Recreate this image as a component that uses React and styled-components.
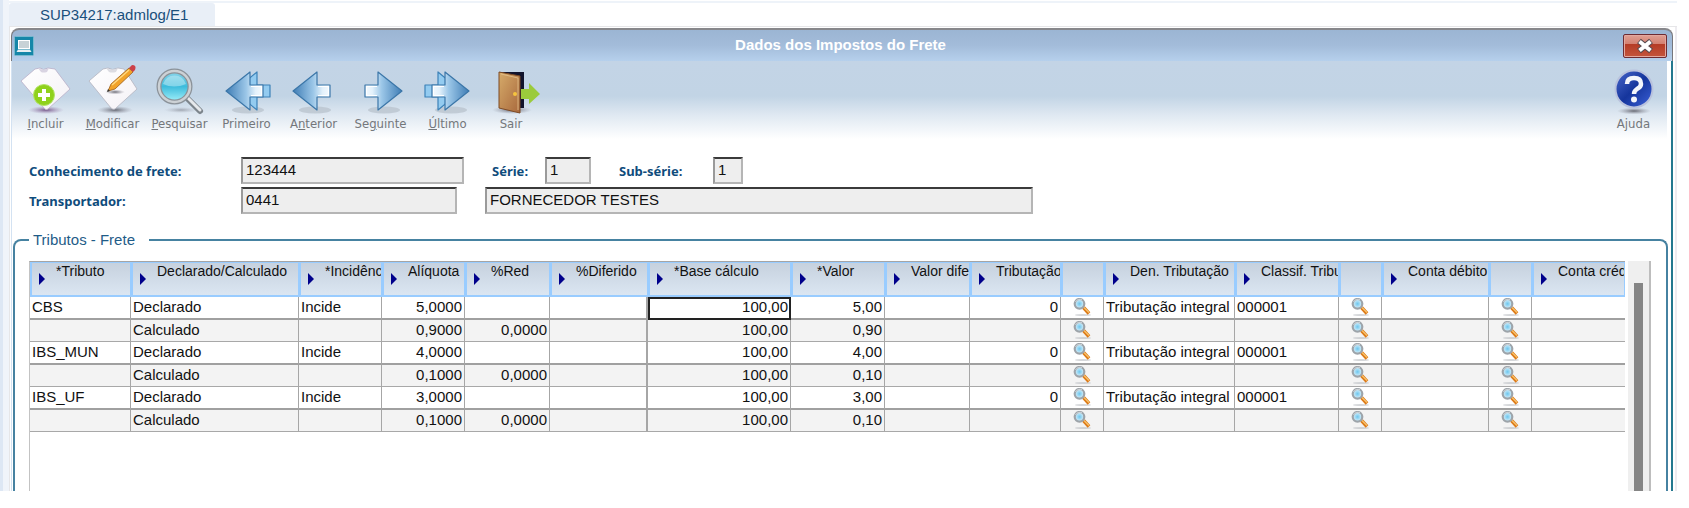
import styled, { createGlobalStyle, css } from "styled-components"


const columns = [
    { title: "*Tributo", width: 101 },
    { title: "Declarado/Calculado", width: 168 },
    { title: "*Incidência", width: 83 },
    { title: "Alíquota", width: 83, right: true },
    { title: "%Red", width: 85, right: true },
    { title: "%Diferido", width: 98, right: true, divider: true },
    { title: "*Base cálculo", width: 143, right: true },
    { title: "*Valor", width: 94, right: true },
    { title: "Valor diferido", width: 85, right: true },
    { title: "Tributação", width: 91, right: true },
    { lookup: true, label: "Procurar tributação", width: 43 },
    { title: "Den. Tributação", width: 131 },
    { title: "Classif. Tributária", width: 104 },
    { lookup: true, label: "Procurar classificação", width: 43 },
    { title: "Conta débito", width: 107 },
    { lookup: true, label: "Procurar conta débito", width: 43 },
    { title: "Conta crédito" },
]

const rows = [
    ["CBS", "Declarado", "Incide", "5,0000", "", "", "100,00", "5,00", "", "0", "", "Tributação integral", "000001", "", "", "", ""],
    ["", "Calculado", "", "0,9000", "0,0000", "", "100,00", "0,90", "", "", "", "", "", "", "", "", ""],
    ["IBS_MUN", "Declarado", "Incide", "4,0000", "", "", "100,00", "4,00", "", "0", "", "Tributação integral", "000001", "", "", "", ""],
    ["", "Calculado", "", "0,1000", "0,0000", "", "100,00", "0,10", "", "", "", "", "", "", "", "", ""],
    ["IBS_UF", "Declarado", "Incide", "3,0000", "", "", "100,00", "3,00", "", "0", "", "Tributação integral", "000001", "", "", "", ""],
    ["", "Calculado", "", "0,1000", "0,0000", "", "100,00", "0,10", "", "", "", "", "", "", "", "", ""],
]


function IconDefs(){
    return(
        <HiddenSvg aria-hidden="true">
            <defs>
                <linearGradient id="paper" x1="0" y1="0" x2="1" y2="1">
                    <stop offset="0" stopColor="#ffffff"/>
                    <stop offset="1" stopColor="#f4f1f6"/>
                </linearGradient>
                <radialGradient id="shadow">
                    <stop offset="0" stopColor="#4b4b55" stopOpacity=".8"/>
                    <stop offset="1" stopColor="#8a8a98" stopOpacity="0"/>
                </radialGradient>
                <radialGradient id="purpleShadow">
                    <stop offset="0" stopColor="#6c4a80" stopOpacity=".9"/>
                    <stop offset="1" stopColor="#a58ab5" stopOpacity="0"/>
                </radialGradient>
                <linearGradient id="lens" x1="0" y1="0" x2="0" y2="1">
                    <stop offset="0" stopColor="#8fd6ea"/>
                    <stop offset=".5" stopColor="#3dbcdc"/>
                    <stop offset="1" stopColor="#a4f2fb"/>
                </linearGradient>
                <linearGradient id="arrow" x1="0" y1="0" x2="1" y2="0">
                    <stop offset="0" stopColor="#3f7db5"/>
                    <stop offset=".55" stopColor="#9cc7e8"/>
                    <stop offset=".8" stopColor="#e3f1fb"/>
                    <stop offset="1" stopColor="#f4faff"/>
                </linearGradient>
                <linearGradient id="door" x1="0" y1="0" x2="1" y2="1">
                    <stop offset="0" stopColor="#d6ab6a"/>
                    <stop offset="1" stopColor="#a8683c"/>
                </linearGradient>
                <linearGradient id="help" x1="0" y1="0" x2="1" y2="1">
                    <stop offset="0" stopColor="#4a68cc"/>
                    <stop offset=".5" stopColor="#15359c"/>
                    <stop offset="1" stopColor="#3c62da"/>
                </linearGradient>
                <radialGradient id="smallLens">
                    <stop offset="0" stopColor="#6cc6ee"/>
                    <stop offset="1" stopColor="#dff2fb"/>
                </radialGradient>
            </defs>
        </HiddenSvg>
    )
}

function AddIcon(){
    return(
        <svg width="50" height="48" viewBox="0 0 50 48" aria-hidden="true">
            <ellipse cx="25" cy="44" rx="18" ry="4" fill="url(#purpleShadow)"/>
            <path d="M14 3 L19 2 Q22 5 27 2 L34 3 L49 23 L27 43 Q25 45 23 42 L0 15 Z" fill="url(#paper)" stroke="#b9afc8" strokeWidth=".8"/>
            <path d="M17 2 Q22 5 28 2 L26 6 Q22 7 20 6 Z" fill="#d9d4e2"/>
            <circle cx="23" cy="29" r="10.5" fill="#8fd11c" stroke="#b4e36a"/>
            <path d="M23 23 V35 M17 29 H29" stroke="#fff" strokeWidth="4"/>
        </svg>
    )
}

function EditIcon(){
    return(
        <svg width="50" height="48" viewBox="0 0 50 48" aria-hidden="true">
            <ellipse cx="27" cy="44" rx="18" ry="4" fill="url(#shadow)"/>
            <path d="M15 3 L20 2 Q24 5 30 2 L36 3 L49 23 L27 43 Q25 44 23 42 L1 15 Z" fill="url(#paper)" stroke="#b4b4bf" strokeWidth=".8"/>
            <path d="M18 2 Q24 5 30 2 L28 6 Q24 7 21 6 Z" fill="#dcdce2"/>
            <ellipse cx="27" cy="26" rx="10" ry="2.5" fill="url(#shadow)"/>
            <path d="M20 25 L23 18 L41 2 L45 6 L27 23 Z" fill="#f2a32b" stroke="#9b5e1c" strokeWidth=".8"/>
            <path d="M24 19 L41 4" stroke="#ffd983" strokeWidth="1.4"/>
            <path d="M41 2 L44 -1 Q49 -1 47 4 L45 6 Z" fill="#cc4048"/>
            <path d="M19 26 L20 23 L22 25 Z" fill="#333"/>
        </svg>
    )
}

function SearchIcon(){
    return(
        <svg width="50" height="48" viewBox="0 0 50 48" aria-hidden="true">
            <ellipse cx="26" cy="44" rx="17" ry="3" fill="url(#shadow)" opacity=".5"/>
            <path d="M32 32 L45 45" stroke="#7d858c" strokeWidth="6" strokeLinecap="round"/>
            <path d="M32 31 L45 44" stroke="#e6e9ec" strokeWidth="3" strokeLinecap="round"/>
            <circle cx="19.5" cy="20.5" r="15.5" fill="url(#lens)" stroke="#8b9299" strokeWidth="5"/>
            <circle cx="19.5" cy="20.5" r="15.5" fill="none" stroke="#ccd1d5" strokeWidth="2.5"/>
            <path d="M8 18 A12 12 0 0 1 31 18 Q19 23 8 18" fill="#d3f1f8" opacity=".45"/>
        </svg>
    )
}

function ArrowIcon({ direction , double }){
    const left = direction === "left"
    return(
        <svg width="50" height="48" viewBox="0 0 50 48" aria-hidden="true">
            <ellipse cx={left ? 26 : 28} cy="44" rx="16" ry="3.5" fill="#b6c0ca" opacity=".7"/>
            <g transform={left ? undefined : "translate(50 0) scale(-1 1)"}>
                {double && <path d="M12 25 L35 6 V19 H48 V31 H35 V44 Z" fill="#93cbf0" stroke="#3d82b8" strokeWidth="1.2" strokeLinejoin="round"/>}
                <path d="M4 25 L28 6 V19 H41 V31 H28 V44 Z" fill="url(#arrow)" stroke="#3b76a8" strokeWidth="1.2" strokeLinejoin="round"/>
                <path d="M29 20.500 H39.500 V29.500 H29" fill="none" stroke="#fff" strokeWidth="1"/>
            </g>
        </svg>
    )
}

function ExitIcon(){
    return(
        <svg width="50" height="48" viewBox="0 0 50 48" aria-hidden="true">
            <ellipse cx="26" cy="44" rx="20" ry="4" fill="url(#shadow)"/>
            <path d="M13 6 H38 V42 H32 L13 7 Z" fill="#11132b"/>
            <path d="M13 6 L34 10 V47 L13 42 Z" fill="url(#door)" stroke="#7d4a25" strokeWidth="1"/>
            <path d="M15 8 L32 12 V44" fill="none" stroke="#e5c38e" strokeWidth=".8"/>
            <circle cx="29" cy="28" r="2" fill="#f5c33e"/>
            <path d="M35 23 H43 V17 L54 28 L43 38 V33 H35 Z" fill="#9bcb3c"/>
        </svg>
    )
}

function HelpIcon(){
    return(
        <svg width="50" height="48" viewBox="0 0 50 48" aria-hidden="true">
            <ellipse cx="25" cy="45" rx="17" ry="3.5" fill="url(#shadow)"/>
            <circle cx="25" cy="23" r="18.5" fill="url(#help)" stroke="#b9c2dd" strokeWidth="2"/>
            <path d="M18 18 Q18 12 25 12 Q32 12 32 18 Q32 21 28 23 Q25 25 25 28" fill="none" stroke="#f3f5fb" strokeWidth="4.5"/>
            <circle cx="25" cy="33.5" r="3" fill="#f3f5fb"/>
        </svg>
    )
}

function LookupIcon(){
    return(
        <svg width="18" height="18" viewBox="0 0 18 18" aria-hidden="true">
            <ellipse cx="10" cy="17" rx="8" ry="1" fill="#b9bdc2" opacity=".6"/>
            <path d="M10.500 9.500 L16 15.500" stroke="#dc7a18" strokeWidth="3.6"/>
            <path d="M11 9.500 L16 14.500" stroke="#f8c570" strokeWidth="1.2"/>
            <circle cx="6.500" cy="5.800" r="4.800" fill="url(#smallLens)" stroke="#9da4aa" strokeWidth="2.2"/>
            <path d="M2.500 4 A4.800 4.800 0 0 1 9 1.800" fill="none" stroke="#d4d8db" strokeWidth="1"/>
        </svg>
    )
}

function SortIcon(){
    return(
        <svg width="6" height="12" viewBox="0 0 6 12" aria-hidden="true">
            <path d="M0 0 L6 6 L0 12 Z" fill="#00008b"/>
        </svg>
    )
}

function WindowIcon(){
    return(
        <svg width="20" height="20" viewBox="0 0 20 20" aria-hidden="true">
            <rect x=".5" y=".5" width="19" height="19" rx="1" fill="#1586a8" stroke="#79b9cf"/>
            <rect x="4.500" y="4.500" width="11" height="8" fill="#c8d2d6" stroke="#fff"/>
            <path d="M4 13.500 H16 L17.500 16 H2.500 Z" fill="#e6eef1"/>
        </svg>
    )
}

function CloseIcon(){
    return(
        <svg width="18" height="16" viewBox="0 0 18 16" aria-hidden="true">
            <path d="M3 3 L15 13 M15 3 L3 13" stroke="#54494f" strokeWidth="6"/>
            <path d="M3.500 3.500 L14.500 12.500 M14.500 3.500 L3.500 12.500" stroke="#fff" strokeWidth="4"/>
        </svg>
    )
}


function Header(){
    return(
        <TitleBar>
            <WindowIcon/>
            <Title>Dados dos Impostos do Frete</Title>
            <CloseButton type="button" aria-label="Fechar"><CloseIcon/></CloseButton>
        </TitleBar>
    )
}

function Toolbar(){
    return(
        <ToolbarWrapper>
            <ToolButton type="button"><AddIcon/><span><u>I</u>ncluir</span></ToolButton>
            <ToolButton type="button"><EditIcon/><span><u>M</u>odificar</span></ToolButton>
            <ToolButton type="button"><SearchIcon/><span><u>P</u>esquisar</span></ToolButton>
            <ToolButton type="button"><ArrowIcon direction="left" double/><span>Primeiro</span></ToolButton>
            <ToolButton type="button"><ArrowIcon direction="left"/><span>A<u>n</u>terior</span></ToolButton>
            <ToolButton type="button"><ArrowIcon direction="right"/><span>Se<u>g</u>uinte</span></ToolButton>
            <ToolButton type="button"><ArrowIcon direction="right" double/><span><u>Ú</u>ltimo</span></ToolButton>
            <ToolButton type="button" $narrow><ExitIcon/><span>Sair</span></ToolButton>
            <Spacer/>
            <ToolButton type="button"><HelpIcon/><span>Ajuda</span></ToolButton>
        </ToolbarWrapper>
    )
}

function FreightForm(){
    return(
        <Form>
            <FormRow>
                <Label htmlFor="conhecimento" $width={212}>Conhecimento de frete:</Label>
                <Input id="conhecimento" $width={223} defaultValue="123444" readOnly/>
                <Gap/>
                <Label htmlFor="serie" $width={53}>Série:</Label>
                <Input id="serie" $width={46} defaultValue="1" readOnly/>
                <Gap/>
                <Label htmlFor="subserie" $width={94}>Sub-série:</Label>
                <Input id="subserie" $width={30} defaultValue="1" readOnly/>
            </FormRow>
            <FormRow>
                <Label htmlFor="transportador" $width={212}>Transportador:</Label>
                <Input id="transportador" $width={216} defaultValue="0441" readOnly/>
                <Gap/>
                <Input aria-label="Nome do transportador" $width={548} defaultValue="FORNECEDOR TESTES" readOnly/>
            </FormRow>
        </Form>
    )
}

function TaxTable(){
    return(
        <Grid>
            <TableArea>
                <Table>
                    <colgroup>
                        {columns.map((column, i) => <Col key={i} $width={column.width}/>)}
                    </colgroup>
                    <thead>
                        <tr>
                            {columns.map((column, i) => (
                                <HeadCell key={i} scope="col">
                                    {column.title && <HeadContent><SortIcon/><span>{column.title}</span></HeadContent>}
                                </HeadCell>
                            ))}
                        </tr>
                    </thead>
                    <tbody>
                        {rows.map((row, r) => (
                            <Row key={r} $calculated={r % 2 === 1}>
                                {row.map((value, c) => (
                                    <Cell key={c} $right={columns[c].right} $divider={columns[c].divider} $selected={r === 0 && c === 6}>
                                        {columns[c].lookup
                                            ? <LookupButton type="button" aria-label={columns[c].label}><LookupIcon/></LookupButton>
                                            : value}
                                    </Cell>
                                ))}
                            </Row>
                        ))}
                    </tbody>
                </Table>
            </TableArea>
            <ScrollTrack><ScrollThumb/></ScrollTrack>
        </Grid>
    )
}

export default function App(){
    return(
        <>
            <GlobalStyle/>
            <IconDefs/>
            <Page>
                <Content>
                    <Tabs><Tab type="button">SUP34217:admlog/E1</Tab></Tabs>
                    <Window>
                        <Header/>
                        <WindowBody>
                            <Toolbar/>
                            <FreightForm/>
                            <Group>
                                <Legend>Tributos - Frete</Legend>
                                <TaxTable/>
                            </Group>
                        </WindowBody>
                    </Window>
                </Content>
            </Page>
        </>
    )
}


const GlobalStyle = createGlobalStyle`
* {
    box-sizing: border-box;
}
body {
    margin: 0;
    background: #ffffff;
    font-family: "Liberation Sans", Arial, sans-serif;
    font-size: 15px;
}
button, input {
    font: inherit;
    margin: 0;
}
`
const HiddenSvg = styled.svg`
position: absolute;
width: 0;
height: 0;
`
const Page = styled.div`
margin-right: 12px;
padding-left: 3px;
background: #dde7f4;
`
const Content = styled.div`
border-left: 6px solid #f0f4fa;
background: #ffffff;
padding-top: 1px;
`
const Tabs = styled.div`
display: flex;
height: 26px;
border-top: 2px solid #eef3f9;
border-bottom: 1px solid #e6e6e8;
`
const Tab = styled.button`
width: 206px;
padding: 0 0 0 31px;
border: none;
border-radius: 3px 3px 0 0;
background: #e9eff7;
color: #1a4f7c;
text-align: left;
`
const Window = styled.div`
padding: 1px 2px 0 1px;
border-left: 1px solid #e6e6e8;
border-right: 2px solid #eeecf0;
`
const TitleBar = styled.header`
display: grid;
grid-template-columns: 1fr auto 1fr;
align-items: center;
height: 33px;
padding: 0 5px 0 2px;
border: 1px solid #77777c;
border-top: 2px solid #87878b;
border-bottom: none;
border-radius: 8px 8px 0 0;
background: linear-gradient(#9bb5d3, #a3bcda 50%, #b6d0ec);
`
const Title = styled.h1`
margin: 0 0 2px;
color: #ffffff;
font-size: 15px;
line-height: 18px;
`
const CloseButton = styled.button`
display: flex;
align-items: center;
justify-content: center;
justify-self: end;
width: 44px;
height: 24px;
padding: 0;
border: 1px solid #6e2c33;
border-radius: 2px;
box-shadow: inset 0 0 0 1px #e3a89f;
background: linear-gradient(#e0a094, #d37f70 42%, #b53c26 43%, #c4553d);
`
const WindowBody = styled.main`
border-left: 1px solid #d3e2f2;
border-right: 2px solid #24788f;
`
const ToolbarWrapper = styled.nav`
display: flex;
height: 78px;
margin-right: 4px;
background: linear-gradient(#c3d4e6, #c2d4e5 45%, #e0e9f2 70%, #ffffff);
`
const ToolButton = styled.button`
display: flex;
flex-direction: column;
align-items: center;
gap: 1px;
flex: none;
width: ${props => props.$narrow ? "60px" : "67px"};
padding: 5px 0 0;
border: none;
background: none;
color: #74777b;
font-family: "DejaVu Sans Condensed", "DejaVu Sans", sans-serif;
font-size: 13px;
line-height: 18px;
svg {
    flex: none;
    overflow: visible;
}
`
const Spacer = styled.div`
flex: 1;
`
const Form = styled.form`
display: grid;
gap: 3px;
padding: 18px 0 17px 17px;
`
const FormRow = styled.div`
display: flex;
align-items: center;
`
const Gap = styled.div`
width: 28px;
`
const Label = styled.label`
width: ${props => props.$width}px;
color: #0f4c7c;
font-family: "Noto Sans", sans-serif;
font-size: 13px;
font-weight: bold;
line-height: 18px;
white-space: nowrap;
`
const Input = styled.input`
width: ${props => props.$width}px;
height: 27px;
padding: 0 3px 2px;
border: 2px solid;
border-color: #3a3a3a #b5b5b5 #b5b5b5 #9a9a9a;
border-radius: 0;
background: #eeeeee;
color: #111111;
outline: none;
`
const Group = styled.fieldset`
min-width: 0;
margin: 0 3px 0 1px;
padding: 12px 15px 0 14px;
border: 2px solid #4682a1;
border-bottom: none;
border-radius: 8px 8px 0 0;
`
const Legend = styled.legend`
padding: 0 14px 0 4px;
color: #1f5c88;
line-height: 18px;
`
const Grid = styled.div`
display: flex;
height: 230px;
border-right: 2px solid #bdbdbd;
`
const TableArea = styled.div`
flex: 1;
min-width: 0;
overflow: hidden;
border-top: 1px solid #a5a5a5;
border-left: 1px solid #c3c3c3;
`
const Table = styled.table`
width: 100%;
table-layout: fixed;
border-collapse: separate;
border-spacing: 0;
color: #111111;
`
const Col = styled.col`
width: ${props => props.$width ? props.$width + "px" : "auto"};
`
const HeadCell = styled.th`
height: 35px;
padding: 0;
border: 1px solid #99ccff;
border-left-width: 2px;
border-bottom-width: 2px;
background: linear-gradient(#c6d1de, #dbe6f2);
font-size: 14px;
font-weight: normal;
text-align: left;
vertical-align: top;
overflow: hidden;
`
const HeadContent = styled.div`
display: flex;
align-items: flex-start;
gap: 11px;
padding-left: 7px;
line-height: 17px;
white-space: nowrap;
overflow: hidden;
svg {
    flex: none;
    margin-top: 10px;
}
`
const Row = styled.tr`
height: ${props => props.$calculated ? "22px" : "23px"};
background: ${props => props.$calculated ? "#f3f3f3" : "#ffffff"};
td {
    border-bottom: ${props => props.$calculated ? "1px solid #a8a8a8" : "2px solid #a0a0a0"};
}
td:last-child {
    border-right: none;
}
`
const Cell = styled.td`
padding: 0 2px 2px;
border-right: ${props => props.$divider ? "2px" : "1px"} solid #a6a6a6;
line-height: 18px;
white-space: nowrap;
overflow: hidden;
text-align: ${props => props.$right ? "right" : "left"};
${props => props.$selected && css`
    outline: 2px solid #222222;
    outline-offset: -2px;
`}
`
const LookupButton = styled.button`
display: block;
width: 18px;
height: 18px;
margin: 0 auto;
padding: 0;
border: none;
background: none;
svg {
    display: block;
}
`
const ScrollTrack = styled.div`
width: 21px;
margin-left: 3px;
padding: 22px 6px 0;
background: #efefef;
`
const ScrollThumb = styled.div`
height: 100%;
background: #858585;
`
